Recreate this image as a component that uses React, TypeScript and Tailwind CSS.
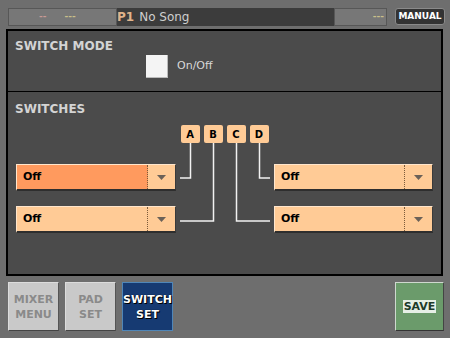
import React from 'react';

const font = { fontFamily: '"DejaVu Sans", "Liberation Sans", sans-serif' };

interface DropdownProps {
  value: string;
  active?: boolean;
}

const Dropdown: React.FC<DropdownProps> = ({ value, active }) => (
  <div className="flex h-[27px] border-t border-l border-[#ffe6cc] border-b-2 border-r border-b-[#2e2e2e] border-r-[#3a3a3a]">
    <div
      className={`flex-1 flex items-center pl-[6px] text-[11px] font-bold text-black border-r border-dotted border-[#7a5a3a] ${
        active ? 'bg-[#ff9a5e]' : 'bg-[#ffcb96]'
      }`}
    >
      {value}
    </div>
    <div className="w-[27px] bg-[#ffcb96] flex items-center justify-center">
      <svg width="9" height="5" viewBox="0 0 9 5">
        <path d="M0 0 H9 L4.5 5 Z" fill="#6b6158" />
      </svg>
    </div>
  </div>
);

const LetterBox: React.FC<{ label: string }> = ({ label }) => (
  <div className="w-[19px] h-[18px] rounded-[2px] bg-[#ffcb96] flex items-center justify-center text-[10px] font-bold text-black">
    {label}
  </div>
);

const BottomButton: React.FC<{ lines: string[]; selected?: boolean }> = ({ lines, selected }) => (
  <button
    className={`w-[51px] h-[49px] flex flex-col items-center justify-center text-[11px] font-bold leading-[15px] border ${
      selected
        ? 'bg-[#163a72] text-white border-[#4f86b8] [text-shadow:0_0_1px_#000,1px_1px_0_#000]'
        : 'bg-[#c9c9c9] text-[#8a8a8a] border-[#dcdcdc] border-b-[#444] border-r-[#555]'
    }`}
  >
    {lines.map(l => (
      <span key={l}>{l}</span>
    ))}
  </button>
);

export default function App() {
  return (
    <div className="w-[450px] h-[338px] bg-[#6e6e6e] overflow-hidden flex flex-col" style={font}>
      {/* top bar */}
      <div className="flex items-stretch h-[18px] mt-[8px] ml-[8px] mr-[4px]">
        <div className="w-[109px] bg-[#777] border border-[#575757] flex items-center text-[9px] font-bold">
          <span className="ml-[30px] text-[#c79a96]">--</span>
          <span className="ml-[18px] text-[#c8bf8a]">---</span>
        </div>
        <div className="w-[217px] bg-[#3c3c3c] flex items-center text-[12px]">
          <span className="font-bold text-[#e0b48c]">P1</span>
          <span className="ml-[5px] text-[#cfcfcf]">No Song</span>
        </div>
        <div className="w-[53px] bg-[#777] border border-[#575757] flex items-center justify-end pr-[2px] text-[9px] font-bold text-[#c8bf8a]">
          ---
        </div>
        <div className="ml-[8px] w-[50px] h-[17px] rounded-[3px] bg-[#333] border border-[#8a8a8a] flex items-center justify-center text-[9px] font-bold text-white">
          MANUAL
        </div>
      </div>

      {/* main panel */}
      <div className="relative ml-[6px] mt-[3px] w-[437px] h-[247px] bg-[#4b4b4b] border-2 border-black">
        <div className="h-[61px] border-b border-black px-[7px] pt-[9px]">
          <div className="text-[12px] font-bold text-[#d4d4d4] leading-[12px]">SWITCH MODE</div>
          <div className="flex items-center mt-[3px] ml-[131px]">
            <div className="w-[22px] h-[23px] bg-[#f4f4f4] border-b border-r border-[#bbb]" />
            <span className="ml-[9px] text-[11px] text-[#d8d8d8]">On/Off</span>
          </div>
        </div>

        <div className="px-[8px] pt-[11px]">
          <div className="text-[12px] font-bold text-[#d4d4d4] leading-[12px] -ml-[1px]">SWITCHES</div>
          <div className="flex justify-center gap-[4px] mt-[10px]">
            <LetterBox label="A" />
            <LetterBox label="B" />
            <LetterBox label="C" />
            <LetterBox label="D" />
          </div>
          <div className="grid grid-cols-[160px_1fr_159px] gap-y-[15px] mt-[21px]">
            <Dropdown value="Off" active />
            <div />
            <Dropdown value="Off" />
            <Dropdown value="Off" />
            <div />
            <Dropdown value="Off" />
          </div>
        </div>

        {/* connector lines */}
        <svg className="absolute left-0 top-0 pointer-events-none" width="437" height="247">
          <g stroke="#f2f2f2" strokeWidth="1.5" fill="none">
            <path d="M182.5 112 V147 H172" />
            <path d="M205.5 112 V190 H172" />
            <path d="M228.5 112 V190 H262" />
            <path d="M251.5 112 V147 H262" />
          </g>
        </svg>
      </div>

      {/* bottom buttons */}
      <div className="flex items-start mt-[6px] ml-[8px] mr-[6px]">
        <div className="flex gap-[6px]">
          <BottomButton lines={['MIXER', 'MENU']} />
          <BottomButton lines={['PAD', 'SET']} />
          <BottomButton lines={['SWITCH', 'SET']} selected />
        </div>
        <div className="ml-auto w-[49px] h-[49px] bg-[#6b9b6b] border border-[#cfd8cf] border-b-[#333] border-r-[#444] flex items-center justify-center">
          <span className="text-[11px] font-bold text-[#1d3a2a] bg-[#e6efe6] px-[1px] leading-[13px]">SAVE</span>
        </div>
      </div>
    </div>
  );
}
